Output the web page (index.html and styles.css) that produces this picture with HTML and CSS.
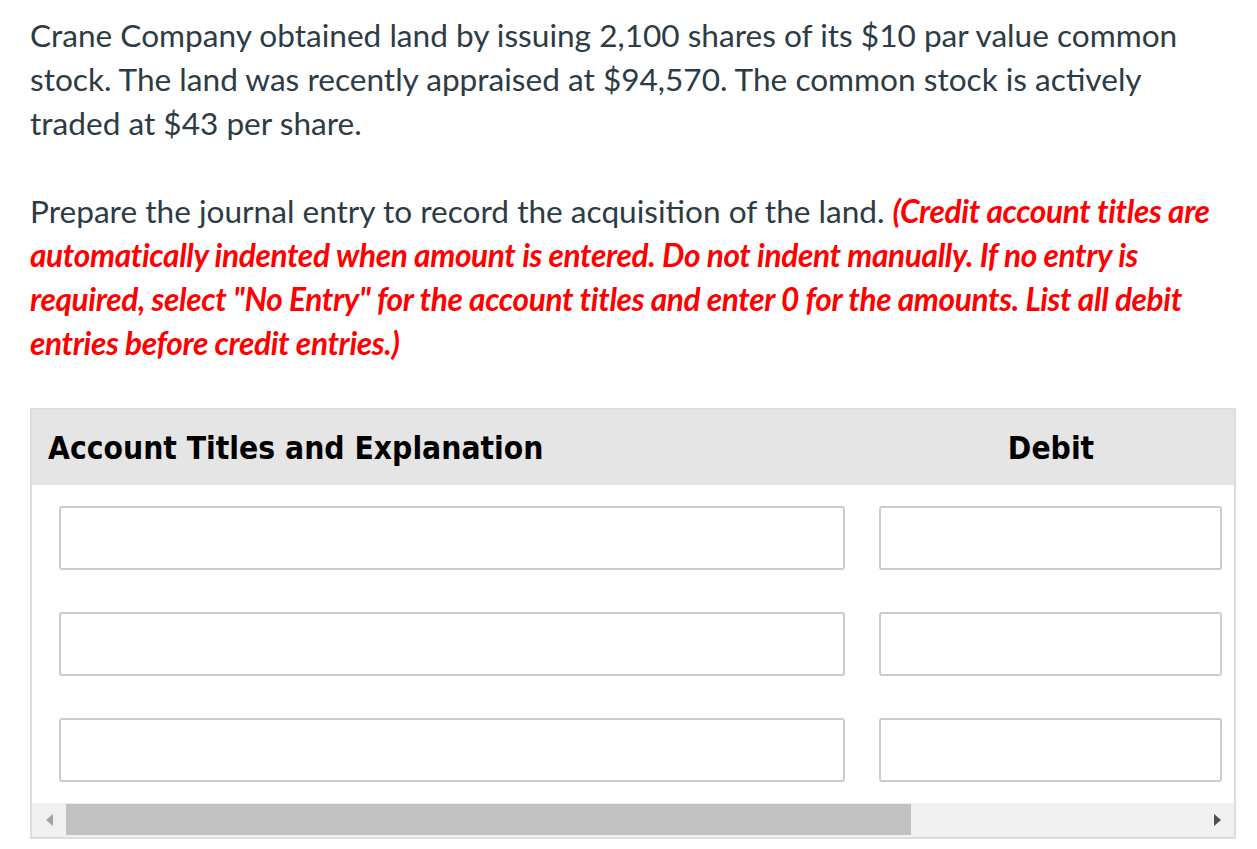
FILE: index.html
```html
<!DOCTYPE html>
<html>
<head>
<meta charset="utf-8">
<link rel="stylesheet" href="styles.css">
</head>
<body>
<div class="page">
  <p class="intro">Crane Company obtained land by issuing 2,100 shares of its $10 par value common stock. The land was recently appraised at $94,570. The common stock is actively traded at $43 per share.</p>
  <p class="task">Prepare the journal entry to record the acquisition of the land. <span class="note">(Credit account titles are automatically indented when amount is entered. Do not indent manually. If no entry is required, select "No Entry" for the account titles and enter 0 for the amounts. List all debit entries before credit entries.)</span></p>
  <div class="journal">
    <div class="head">
      <div class="col-acct">Account Titles and Explanation</div>
      <div class="col-debit">Debit</div>
    </div>
    <div class="row"><div class="input wide"></div><div class="input amt"></div></div>
    <div class="row"><div class="input wide"></div><div class="input amt"></div></div>
    <div class="row"><div class="input wide"></div><div class="input amt"></div></div>
    <div class="scrollbar">
      <div class="arrow left"></div>
      <div class="track"><div class="thumb"></div></div>
      <div class="arrow right"></div>
    </div>
  </div>
</div>
</body>
</html>
```
FILE: styles.css
```css
html, body {
  margin: 0;
  padding: 0;
  background: #fff;
}
.page {
  padding: 13px 0 0 30px;
  font-family: Lato, "Liberation Sans", sans-serif;
  font-size: 31.6px;
  line-height: 44px;
  color: #2d3b45;
}
.intro, .task {
  margin: 0;
  width: 1196px;
}
.intro {
  margin-bottom: 44px;
}
.task {
  margin-bottom: 43px;
}
.note {
  color: #ff0000;
  font-weight: 700;
  font-style: italic;
  letter-spacing: -0.35px;
}
.journal {
  width: 1202px;
  border: 2px solid #dddddd;
}
.head {
  display: flex;
  align-items: center;
  height: 75px;
  background: #e5e5e5;
  font-family: "DejaVu Sans Condensed", "DejaVu Sans", sans-serif;
  font-weight: 700;
  font-size: 31.5px;
  color: #000;
}
.col-acct {
  width: 831px;
  padding-left: 16px;
}
.col-debit {
  width: 344px;
  text-align: center;
}
.row {
  display: flex;
  gap: 34px;
  padding: 21px 12px 21px 27px;
}
.input {
  box-sizing: border-box;
  height: 64px;
  border: 2px solid #cccccc;
  border-radius: 3px;
  background: #fff;
}
.wide { width: 787px; }
.amt { width: 344px; }
.scrollbar {
  display: flex;
  align-items: stretch;
  height: 34px;
  background: #f0f0f0;
}
.arrow {
  width: 34px;
  display: flex;
  align-items: center;
  justify-content: center;
}
.arrow.left::before {
  content: "";
  border-top: 6px solid transparent;
  border-bottom: 6px solid transparent;
  border-right: 7px solid #a3a3a3;
}
.arrow.right::before {
  content: "";
  border-top: 6px solid transparent;
  border-bottom: 6px solid transparent;
  border-left: 7px solid #505050;
}
.track {
  flex: 1;
  padding: 1px 0 2px;
}
.thumb {
  width: 845px;
  height: 100%;
  background: #c1c1c1;
}
```
